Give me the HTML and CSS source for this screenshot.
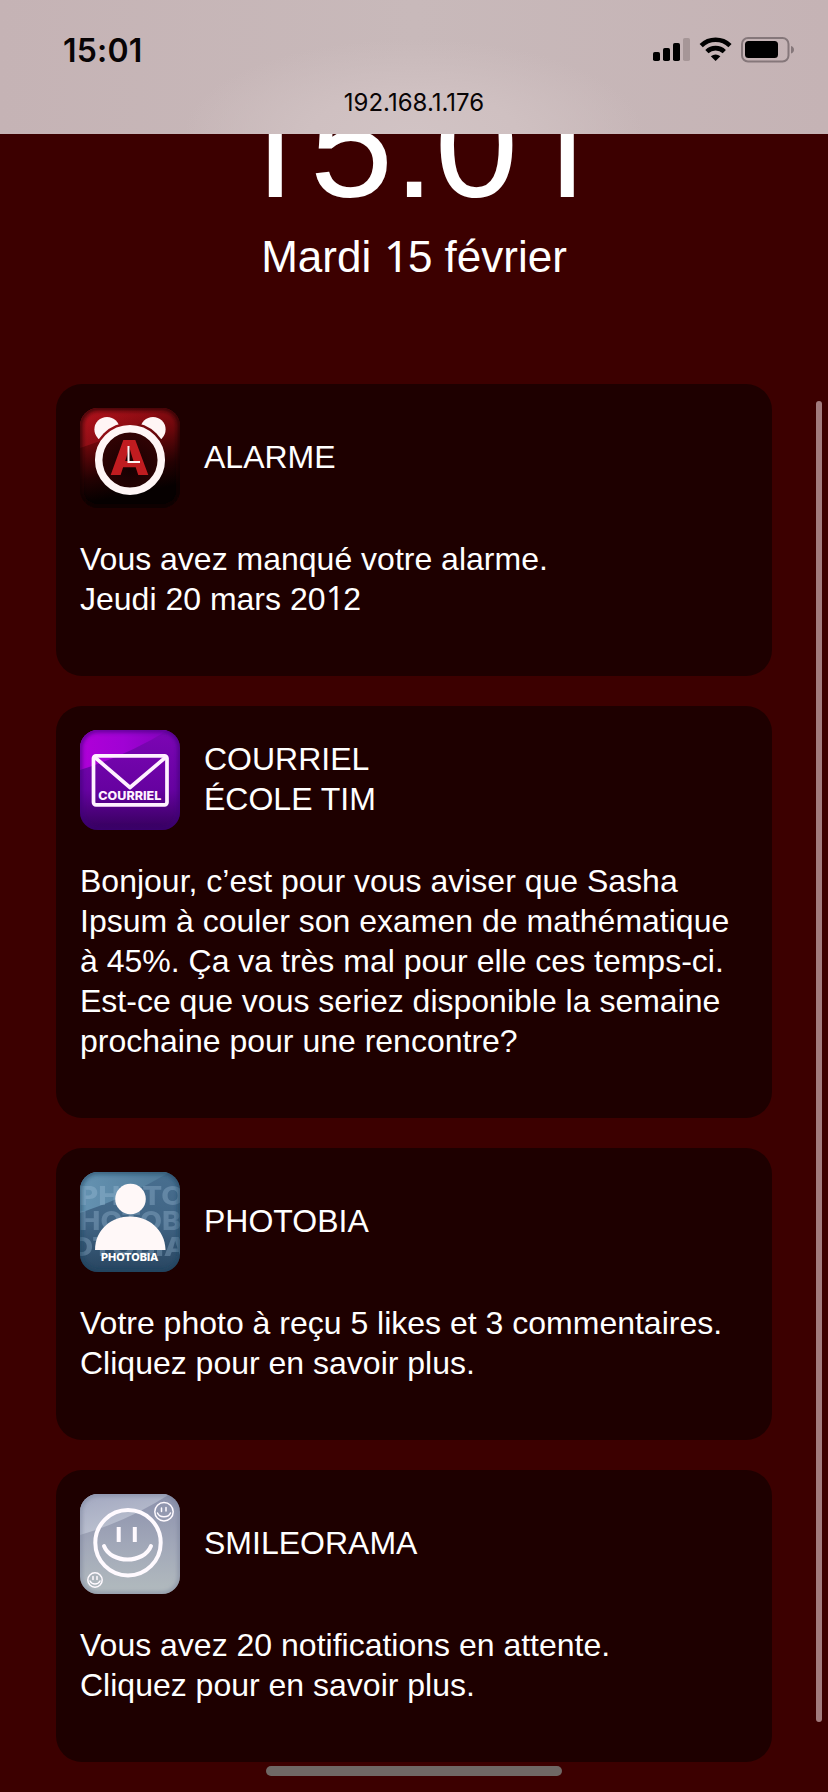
FILE: index.html
```html
<!DOCTYPE html>
<html lang="fr">
<head>
<meta charset="utf-8">
<title>Notifications</title>
<link rel="stylesheet" href="styles.css">
</head>
<body>
<header class="status">
  <div class="status-row">
    <span class="status-time">15:01</span>
    <svg class="status-icons" width="142" height="26" viewBox="0 0 142 26">
      <rect x="0" y="15" width="7" height="9" rx="1.8"/>
      <rect x="10" y="11" width="7" height="13" rx="1.8"/>
      <rect x="20" y="6" width="7" height="18" rx="1.8"/>
      <rect x="30" y="1" width="7" height="23" rx="1.8" fill="#a69697"/>
      <g fill="none" stroke="#000" stroke-width="4.6">
        <path d="M48.2 8.6A20.8 20.8 0 0 1 77 8.600"/>
        <path d="M53.900 14.600A12.500 12.500 0 0 1 71.300 14.600"/>
      </g>
      <path d="M57.800 19.300Q62.600 15.800 67.400 19.300L62.600 24.100Z"/>
      <rect x="89" y="1" width="46.500" height="23.500" rx="6" fill="none" stroke="#85777a" stroke-width="2"/>
      <rect x="92" y="4" width="33" height="17" rx="3.500"/>
      <path d="M138 9Q141 10 141 12.700T138 16.500Z" fill="#85777a"/>
    </svg>
  </div>
  <div class="status-url">192.168.1.176</div>
</header>
<main class="lock">
  <div class="clock"><span class="one">1</span>5:0<span class="one">1</span></div>
  <div class="date">Mardi <span class="one">1</span>5 février</div>
  <section class="list">
    <article class="card">
      <div class="card-head">
        <svg class="app-icon" viewBox="0 0 100 100">
          <defs>
            <linearGradient id="aBg" x1=".4" y1="0" x2=".6" y2="1"><stop offset="0" stop-color="#990d14"/><stop offset=".3" stop-color="#6c070b"/><stop offset=".62" stop-color="#240102"/><stop offset=".85" stop-color="#060000"/></linearGradient>
            <linearGradient id="aGloss" x1="0" y1="0" x2="1" y2="0"><stop offset="0" stop-color="#d21a28" stop-opacity=".4"/><stop offset="1" stop-color="#b01018" stop-opacity=".1"/></linearGradient>
            <radialGradient id="aFace" cx=".5" cy=".65" r=".6"><stop offset="0" stop-color="#160001"/><stop offset="1" stop-color="#330304"/></radialGradient>
            <clipPath id="round"><rect width="100" height="100" rx="18"/></clipPath>
            <mask id="bellMask"><rect width="100" height="100" fill="#fff"/><circle cx="50" cy="52" r="37.500" fill="#000"/></mask>
            <filter id="edge"><feGaussianBlur stdDeviation="2"/></filter>
          </defs>
          <g clip-path="url(#round)">
            <rect width="100" height="100" fill="url(#aBg)"/>
            <path d="M0 40Q45 26 88 0H0Z" fill="url(#aGloss)"/>
            <rect width="100" height="100" rx="18" fill="none" stroke="#160000" stroke-opacity=".8" stroke-width="5" filter="url(#edge)"/>
          </g>
          <g fill="#fff5f5" mask="url(#bellMask)"><circle cx="27" cy="21.500" r="12.600"/><circle cx="73" cy="21.500" r="12.600"/></g>
          <circle cx="50" cy="52" r="31.300" fill="url(#aFace)" stroke="#fff5f5" stroke-width="7.500"/>
          <text class="icon-text" x="29.500" y="67" font-size="48" textLength="40" lengthAdjust="spacingAndGlyphs" fill="#c01c20">A</text>
          <path d="M48.500 38V54H60" fill="none" stroke="#fff5f5" stroke-width="2"/>
        </svg>
        <h2 class="card-title">ALARME</h2>
      </div>
      <p class="card-text">Vous avez manqué votre alarme.<br>Jeudi 20 mars 20<span class="one">1</span>2</p>
    </article>
    <article class="card">
      <div class="card-head">
        <svg class="app-icon" viewBox="0 0 100 100">
          <defs>
            <linearGradient id="cBg" x1="0" y1="0" x2="0" y2="1"><stop offset="0" stop-color="#7d05b5"/><stop offset=".6" stop-color="#6602a0"/><stop offset="1" stop-color="#35005c"/></linearGradient>
            <linearGradient id="cGloss" x1="0" y1="0" x2="1" y2="0"><stop offset="0" stop-color="#b000d8"/><stop offset=".5" stop-color="#a002d4"/><stop offset="1" stop-color="#8503bd"/></linearGradient>
          </defs>
          <g clip-path="url(#round)">
            <rect width="100" height="100" fill="url(#cBg)"/>
            <path d="M0 40Q48 25 88 0H0Z" fill="url(#cGloss)"/>
            <rect width="100" height="100" rx="18" fill="none" stroke="#3c0078" stroke-opacity=".8" stroke-width="4" filter="url(#edge)"/>
          </g>
          <g fill="none" stroke="#fff2ff" stroke-width="3.700" stroke-linejoin="round"><rect x="13.500" y="25.800" width="73.500" height="49" rx="2.500"/><path d="M14.500 27L50 57.500 86 27"/></g>
          <text class="icon-text" x="18.300" y="69.600" font-size="11.700" textLength="63" lengthAdjust="spacingAndGlyphs" fill="#fff2ff">COURRIEL</text>
        </svg>
        <h2 class="card-title">COURRIEL<br>ÉCOLE TIM</h2>
      </div>
      <p class="card-text">Bonjour, c’est pour vous aviser que Sasha<br>Ipsum à couler son examen de mathématique<br>à 45%. Ça va très mal pour elle ces temps-ci.<br>Est-ce que vous seriez disponible la semaine<br>prochaine pour une rencontre?</p>
    </article>
    <article class="card">
      <div class="card-head">
        <svg class="app-icon" viewBox="0 0 100 100">
          <defs>
            <linearGradient id="pBg" x1="0" y1="0" x2="0" y2="1"><stop offset="0" stop-color="#486f90"/><stop offset=".5" stop-color="#406484"/><stop offset="1" stop-color="#284560"/></linearGradient>
            <linearGradient id="pGloss" x1="0" y1="0" x2="1" y2="0"><stop offset="0" stop-color="#6593b2"/><stop offset="1" stop-color="#507997"/></linearGradient>
          </defs>
          <g clip-path="url(#round)">
            <rect width="100" height="100" fill="url(#pBg)"/>
            <path d="M0 41Q48 25 90 0H0Z" fill="url(#pGloss)"/>
            <g class="icon-text" font-size="26" fill="#a5c3dc" opacity=".32">
              <text x="-1" y="33" textLength="105" lengthAdjust="spacingAndGlyphs">PHOTO</text>
              <text x="-1" y="58" textLength="102" lengthAdjust="spacingAndGlyphs">HOTOB</text>
              <text x="-10" y="84" textLength="117" lengthAdjust="spacingAndGlyphs">OTOBIA</text>
            </g>
            <rect width="100" height="100" rx="18" fill="none" stroke="#1f405c" stroke-opacity=".7" stroke-width="4" filter="url(#edge)"/>
          </g>
          <g fill="#fff8f8"><circle cx="50.500" cy="27" r="15.300"/><path d="M15 78C15 57 32 44.500 50 44.500S85 57 85.500 78Z"/></g>
          <text class="icon-text" x="21" y="89.200" font-size="11" textLength="57.500" lengthAdjust="spacingAndGlyphs" fill="#fff">PHOTOBIA</text>
        </svg>
        <h2 class="card-title">PHOTOBIA</h2>
      </div>
      <p class="card-text">Votre photo à reçu 5 likes et 3 commentaires.<br>Cliquez pour en savoir plus.</p>
    </article>
    <article class="card">
      <div class="card-head">
        <svg class="app-icon" viewBox="0 0 100 100">
          <defs>
            <linearGradient id="sBg" x1="0" y1="0" x2="0" y2="1"><stop offset="0" stop-color="#8c91ac"/><stop offset=".5" stop-color="#a1a7b8"/><stop offset="1" stop-color="#b2bbbe"/></linearGradient>
            <linearGradient id="sGloss" x1="0" y1="0" x2=".4" y2="1"><stop offset="0" stop-color="#a3a8c0"/><stop offset="1" stop-color="#bcc2d0"/></linearGradient>
          </defs>
          <g clip-path="url(#round)">
            <rect width="100" height="100" fill="url(#sBg)"/>
            <path d="M0 41Q48 27 90 0H0Z" fill="url(#sGloss)"/>
            <rect width="100" height="100" rx="18" fill="none" stroke="#78819a" stroke-opacity=".65" stroke-width="4" filter="url(#edge)"/>
          </g>
          <g fill="none" stroke="#fffaff" stroke-linecap="round">
            <g stroke-width="4"><circle cx="48" cy="48.700" r="32.700"/><path d="M24 52C31 70 64 70 71 52"/><path d="M38.700 33V48M54.800 33V48" stroke-linecap="butt"/></g>
            <g stroke-width="1.500"><circle cx="84" cy="17.800" r="9.200"/><path d="M77.500 19C79.500 24 88.500 24 90.500 19M81.500 14V17.500M86 13.500V17"/><circle cx="15" cy="86" r="7.200"/><path d="M10 87C12 91 18 91 20 87M13 82.500V85.500M17 82.500V85.500"/></g>
          </g>
        </svg>
        <h2 class="card-title">SMILEORAMA</h2>
      </div>
      <p class="card-text">Vous avez 20 notifications en attente.<br>Cliquez pour en savoir plus.</p>
    </article>
  </section>
</main>
<div class="scroll-thumb"></div>
<div class="home-bar"></div>
</body>
</html>
```
FILE: styles.css
```css
* { box-sizing: border-box; }
html, body { margin: 0; height: 1792px; overflow: hidden; }
body {
  position: relative;
  background: #3c0000;
  color: #fff;
  font-family: "Liberation Sans", Arial, sans-serif;
}
.status {
  position: relative;
  z-index: 2;
  height: 134px;
  padding-top: 30px;
  background:
    radial-gradient(ellipse 230px 95px at 50% 100%, #d1c3c4 0%, #cfc0c1 45%, rgba(207, 192, 193, 0) 100%),
    linear-gradient(90deg, #c5b3b5, #c8b9ba 50%, #c5b3b5);
  color: #080405;
  font-family: Inter, sans-serif;
}
.status-row {
  display: flex;
  justify-content: space-between;
  align-items: center;
  height: 40px;
  padding: 0 33px 0 63px;
}
.status-time { font-size: 32px; font-weight: 600; letter-spacing: 0.2px; }
.status-icons { display: block; }
.status-url {
  margin-top: 17px;
  font-size: 24px;
  line-height: 32px;
  text-align: center;
}
/* Footless figure one, set on the width of the surrounding digits */
.one {
  display: inline-block;
  width: 0.556em;
  line-height: 1;
  text-indent: 0.015em;
  font-family: "Noto Sans", sans-serif;
}
.clock {
  margin-top: -74px;
  height: 170px;
  font-size: 150px;
  line-height: 170px;
  text-align: center;
}
.date {
  margin-top: 2px;
  height: 50px;
  font-size: 44px;
  line-height: 50px;
  text-align: center;
}
.list {
  display: flex;
  flex-direction: column;
  gap: 30px;
  margin-top: 102px;
  padding: 0 56px;
}
.card {
  padding: 24px 20px 57px 24px;
  border-radius: 26px;
  background: #1e0000;
}
.card-head { display: flex; align-items: center; gap: 24px; height: 100px; }
.app-icon { display: block; flex: none; width: 100px; height: 100px; }
.card-title { margin: 0; padding-bottom: 2px; font-size: 32px; font-weight: 400; line-height: 40px; }
.card-text { margin: 31px 0 0; font-size: 32px; line-height: 40px; white-space: nowrap; }
.icon-text { font-family: Inter, sans-serif; font-weight: 800; }
.scroll-thumb {
  position: absolute;
  top: 401px;
  right: 6px;
  width: 6px;
  height: 1321px;
  border-radius: 3px;
  background: #a17b7d;
}
.home-bar {
  position: absolute;
  top: 1766px;
  left: 266px;
  width: 296px;
  height: 10px;
  border-radius: 5px;
  background: #6f6865;
}
```
